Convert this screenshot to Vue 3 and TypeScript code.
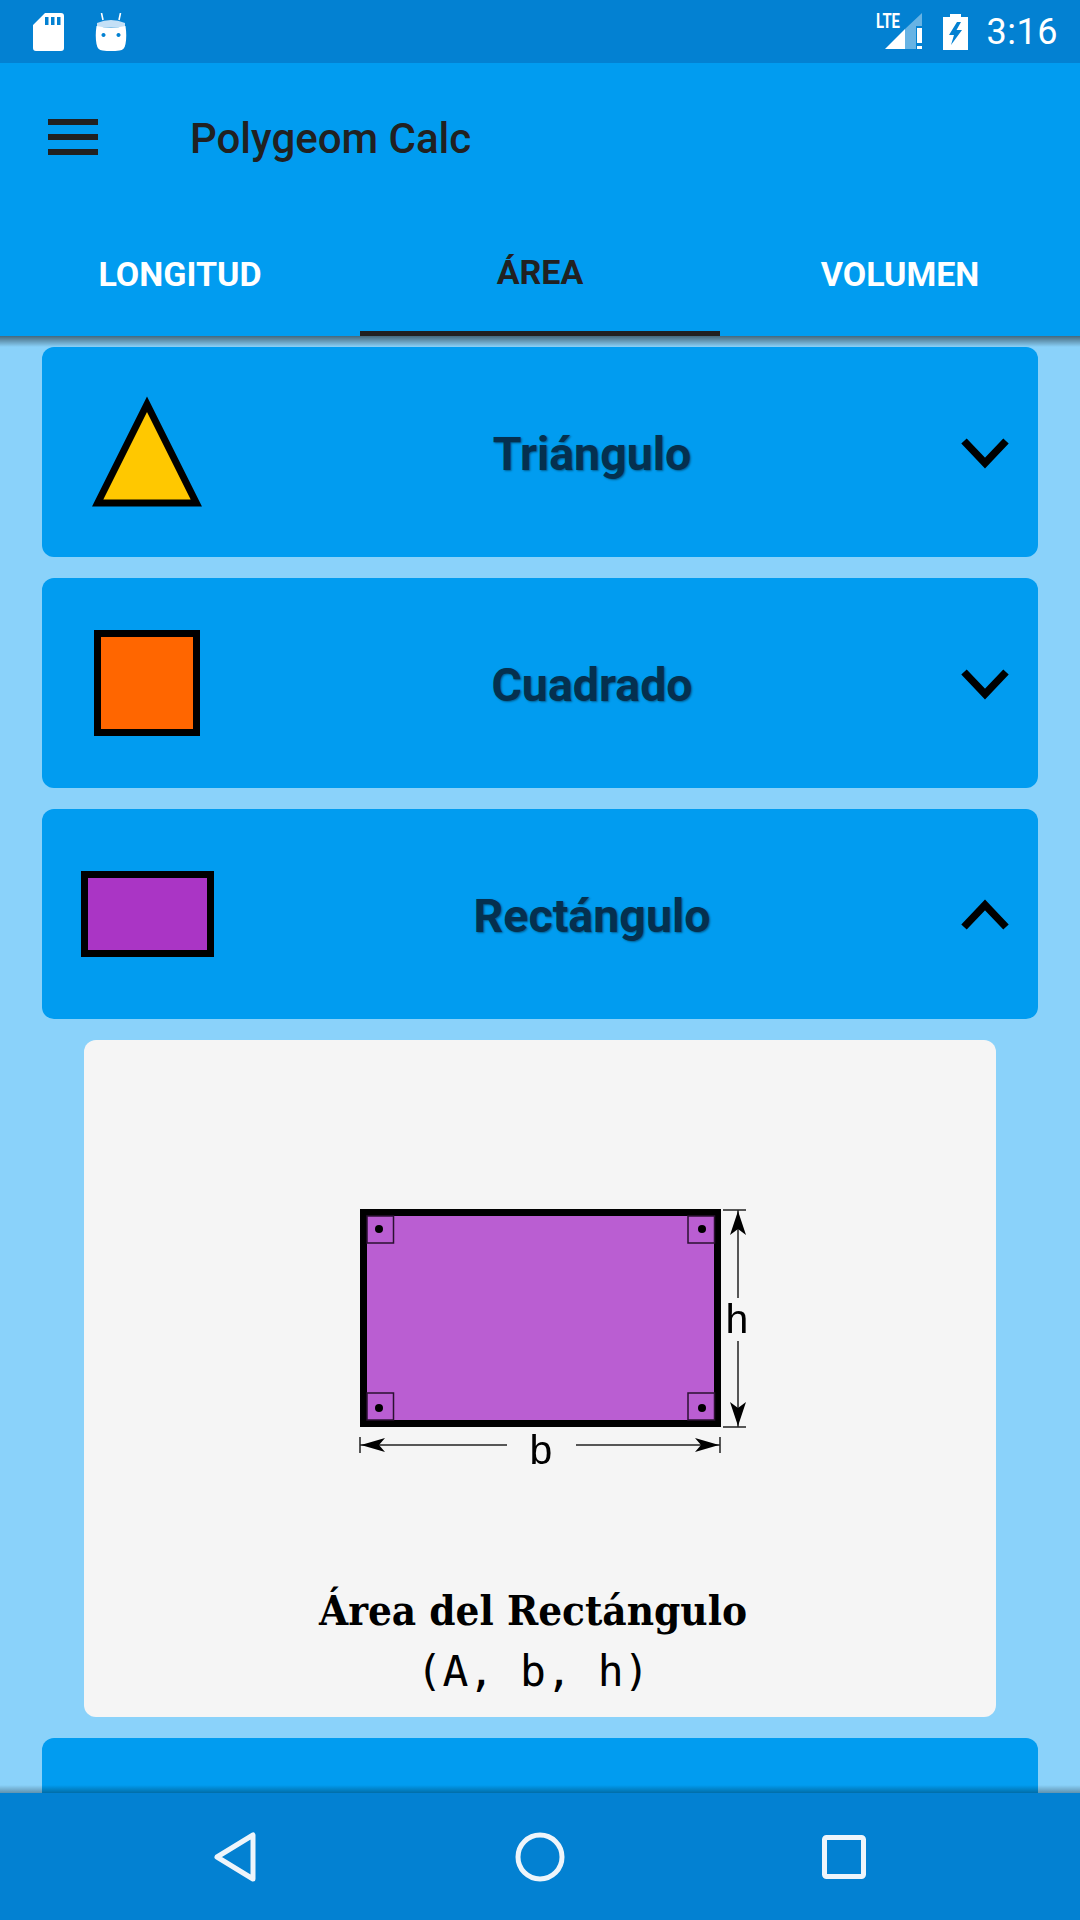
<script setup lang="ts">
interface Shape {
  name: string
  open: boolean
}

const tabs = ['LONGITUD', 'ÁREA', 'VOLUMEN']
const activeTab = 'ÁREA'

const shapes: Shape[] = [
  { name: 'Triángulo', open: false },
  { name: 'Cuadrado', open: false },
  { name: 'Rectángulo', open: true },
]

// right angle markers in the diagram: box origin + dot
const corners = [
  { x: 367, y: 1216, dx: 379, dy: 1229 },
  { x: 688, y: 1216, dx: 702, dy: 1229 },
  { x: 367, y: 1393, dx: 379, dy: 1408 },
  { x: 688, y: 1393, dx: 702, dy: 1408 },
]
</script>

<template>
  <div class="phone">
    <div class="status-bar">
      <div class="status-left">
        <svg width="31" height="38" viewBox="0 0 31 38">
          <path fill="#fff" fill-rule="evenodd" d="M12 0H28a3 3 0 0 1 3 3V35a3 3 0 0 1-3 3H3a3 3 0 0 1-3-3V12ZM12 4v8h3.500V4ZM18 4v8h3.500V4ZM24 4v8h3.500V4Z" />
        </svg>
        <svg width="32" height="38" viewBox="0 0 32 38">
          <path stroke="#fff" stroke-width="1.600" d="M6.500 0 8 7M25.500 0 24 7" />
          <path fill="#c4e0f6" d="M2 10q14-6 28 0v4H2Z" />
          <path fill="#fff" fill-rule="evenodd" d="M1.500 13q14.500 3 29 0 1.500 10 0 18-1 6-6 6.500-8.500 1-17 0-5-.5-6-6.500-1.500-8 0-18ZM8.500 20a2 2 0 1 0 .01 0ZM23.500 20a2 2 0 1 0 .01 0Z" />
        </svg>
      </div>
      <div class="status-right">
        <svg class="signal" width="48" height="62" viewBox="0 -12 48 62">
          <text x="0" y="15" class="lte" textLength="24" lengthAdjust="spacingAndGlyphs">LTE</text>
          <path fill="#fff" d="M9 36 29 16V36Z" />
          <path fill="#fff" opacity=".4" d="M29 16 46 0V13H40V36H29Z" />
          <path fill="#fff" d="M41 15h5V30h-5ZM41 33h5v3h-5Z" />
        </svg>
        <svg class="battery" width="25" height="36" viewBox="0 0 25 36">
          <path fill="#fff" fill-rule="evenodd" d="M7 0H18V3H25V36H0V3H7ZM14 8 6 21H11L8 31 19 16H13.500L18 8Z" />
        </svg>
        <span class="clock">3:16</span>
      </div>
    </div>

    <header class="app-bar">
      <div class="toolbar">
        <button class="menu-btn" aria-label="Menu">
          <span></span>
          <span></span>
          <span></span>
        </button>
        <h1 class="title">Polygeom Calc</h1>
      </div>
      <nav class="tabs">
        <div
          v-for="tab in tabs"
          :key="tab"
          class="tab"
          :class="{ active: tab === activeTab }"
        >
          {{ tab }}
        </div>
      </nav>
    </header>

    <main class="content">
      <section v-for="shape in shapes" :key="shape.name" class="card">
        <div class="card-icon">
          <svg v-if="shape.name === 'Triángulo'" width="112" height="112" viewBox="0 0 112 112">
            <path d="M56 8.300 105.300 107H6.700Z" fill="#ffc800" stroke="#000" stroke-width="7" stroke-miterlimit="6" />
          </svg>
          <svg v-else-if="shape.name === 'Cuadrado'" width="106" height="106" viewBox="0 0 106 106">
            <rect x="3.500" y="3.500" width="99" height="99" fill="#ff6600" stroke="#000" stroke-width="7" />
          </svg>
          <svg v-else width="133" height="86" viewBox="0 0 133 86">
            <rect x="3.500" y="3.500" width="126" height="79" fill="#aa35c5" stroke="#000" stroke-width="7" />
          </svg>
        </div>
        <h2 class="card-title">{{ shape.name }}</h2>
        <svg class="chevron" :class="{ up: shape.open }" width="48" height="32" viewBox="0 0 48 32">
          <path d="M3 4 24 26 45 4" fill="none" stroke="#000" stroke-width="7.500" />
        </svg>
      </section>

      <section class="panel">
        <svg class="diagram" width="440" height="290" viewBox="320 1190 440 290">
          <rect x="363.500" y="1212.500" width="354" height="211" fill="#ba5ed2" stroke="#000" stroke-width="7" />
          <g v-for="c in corners" :key="c.x + '-' + c.y">
            <rect :x="c.x" :y="c.y" width="26.500" height="27" fill="none" stroke="#2a1030" stroke-width="1.500" />
            <circle :cx="c.dx" :cy="c.dy" r="4" fill="#000" />
          </g>
          <g stroke="#222" stroke-width="1.500" fill="none">
            <path d="M723 1210H746M738 1210V1298M738 1341V1427M723 1427H746" />
            <path d="M360 1437V1453M720 1437V1453M360 1445H507M576 1445H720" />
          </g>
          <g fill="#000">
            <path d="M738 1211 746 1235 738 1229 730 1235Z" />
            <path d="M738 1426 746 1402 738 1408 730 1402Z" />
            <path d="M361 1445 385 1438 379 1445 385 1452Z" />
            <path d="M719 1445 695 1438 701 1445 695 1452Z" />
          </g>
          <text x="737" y="1333" class="dim">h</text>
          <text x="541" y="1464" class="dim">b</text>
        </svg>
        <div class="formula-name">Área del Rectángulo</div>
        <div class="formula-args">(A, b, h)</div>
      </section>

      <section class="card"></section>
    </main>

    <footer class="nav-bar">
      <svg width="46" height="52" viewBox="0 0 46 52">
        <path d="M40 4V48L4 26Z" fill="none" stroke="#eef5fb" stroke-width="5" stroke-linejoin="round" />
      </svg>
      <svg width="50" height="50" viewBox="0 0 50 50">
        <circle cx="25" cy="25" r="22" fill="none" stroke="#eef5fb" stroke-width="5" />
      </svg>
      <svg width="44" height="44" viewBox="0 0 44 44">
        <rect x="2.500" y="2.500" width="39" height="39" rx="2" fill="none" stroke="#eef5fb" stroke-width="5" />
      </svg>
    </footer>
  </div>
</template>

<style>
html,
body {
  margin: 0;
  padding: 0;
}
</style>

<style scoped>
.phone {
  width: 1080px;
  height: 1920px;
  display: flex;
  flex-direction: column;
  overflow: hidden;
  background: #8ad2fa;
  font-family: Roboto, sans-serif;
}

/* ── Status bar ─────────────────────────── */
.status-bar {
  height: 63px;
  flex-shrink: 0;
  display: flex;
  align-items: center;
  justify-content: space-between;
  padding: 0 22px 0 33px;
  background: #0381d2;
  color: #fff;
}

.status-left {
  display: flex;
  align-items: center;
  gap: 31px;
}

.status-right {
  display: flex;
  align-items: center;
}

.signal {
  margin-right: 19px;
}

.lte {
  font-family: Roboto, sans-serif;
  font-size: 20px;
  font-weight: 700;
  fill: #fff;
}

.battery {
  margin-right: 19px;
}

.clock {
  font-size: 36px;
  letter-spacing: 0.5px;
}

/* ── App bar ────────────────────────────── */
.app-bar {
  position: relative;
  z-index: 2;
  flex-shrink: 0;
  height: 273px;
  display: flex;
  flex-direction: column;
  background: #019cf0;
}

/* drop shadow under the bar, only downward */
.app-bar::after {
  content: '';
  position: absolute;
  left: 0;
  right: 0;
  top: 100%;
  height: 11px;
  background: linear-gradient(rgba(0, 0, 0, 0.5), rgba(0, 0, 0, 0));
}

.toolbar {
  height: 147px;
  display: flex;
  align-items: center;
  padding-left: 48px;
}

.menu-btn {
  width: 50px;
  height: 36px;
  padding: 0;
  border: 0;
  background: none;
  display: flex;
  flex-direction: column;
  justify-content: space-between;
}

.menu-btn span {
  height: 6px;
  background: #212121;
}

.title {
  margin: 4px 0 0 92px;
  font-size: 42px;
  font-weight: 500;
  color: #212121;
}

.tabs {
  flex: 1;
  display: grid;
  grid-template-columns: repeat(3, 1fr);
}

.tab {
  display: flex;
  align-items: center;
  justify-content: center;
  padding-top: 2px;
  box-sizing: border-box;
  font-size: 34px;
  font-weight: 700;
  color: #fff;
}

.tab.active {
  color: #212121;
  border-bottom: 5px solid #212121;
}

/* ── Accordion ──────────────────────────── */
.content {
  flex: 1;
  min-height: 0;
  overflow: hidden;
  display: flex;
  flex-direction: column;
  gap: 21px;
  padding: 11px 42px 0;
}

.card {
  flex-shrink: 0;
  height: 210px;
  display: grid;
  grid-template-columns: 210px 1fr 106px;
  align-items: center;
  border-radius: 12px;
  background: #019cf0;
}

.card-icon {
  display: flex;
  justify-content: center;
  align-items: center;
  filter: blur(0.4px);
}

.card-title {
  margin: 4px 0 0;
  text-align: center;
  font-size: 46.500px;
  font-weight: 700;
  color: #05304f;
  text-shadow: 1px 1px 2px rgba(0, 0, 0, 0.4);
}

.chevron {
  justify-self: center;
  margin-top: 2px;
}

.chevron.up {
  transform: rotate(180deg);
}

.panel {
  flex-shrink: 0;
  height: 677px;
  box-sizing: border-box;
  margin: 0 42px;
  padding: 150px 14px 0 0;
  border-radius: 12px;
  background: #f5f5f5;
  display: flex;
  flex-direction: column;
  align-items: center;
  color: #000;
}

.diagram {
  flex-shrink: 0;
  margin-right: -14px;
  filter: blur(0.4px);
}

.dim {
  font-family: 'Liberation Sans', sans-serif;
  font-size: 41px;
  text-anchor: middle;
  fill: #000;
}

.formula-name {
  margin-top: 101px;
  font-family: 'DejaVu Serif Condensed', 'DejaVu Serif', serif;
  font-size: 41.800px;
  font-weight: 700;
  line-height: 60px;
}

.formula-args {
  margin-top: 2px;
  font-family: 'DejaVu Sans Mono', monospace;
  font-size: 43px;
  line-height: 56px;
}

/* ── Nav bar ────────────────────────────── */
.nav-bar {
  position: relative;
  z-index: 2;
  flex-shrink: 0;
  height: 127px;
  display: grid;
  grid-template-columns: repeat(3, 1fr);
  place-items: center;
  padding: 0 84px;
  background: #0381d2;
}

.nav-bar::before {
  content: '';
  position: absolute;
  left: 0;
  right: 0;
  bottom: 100%;
  height: 8px;
  background: linear-gradient(rgba(0, 0, 0, 0), rgba(0, 0, 0, 0.3));
}
</style>
